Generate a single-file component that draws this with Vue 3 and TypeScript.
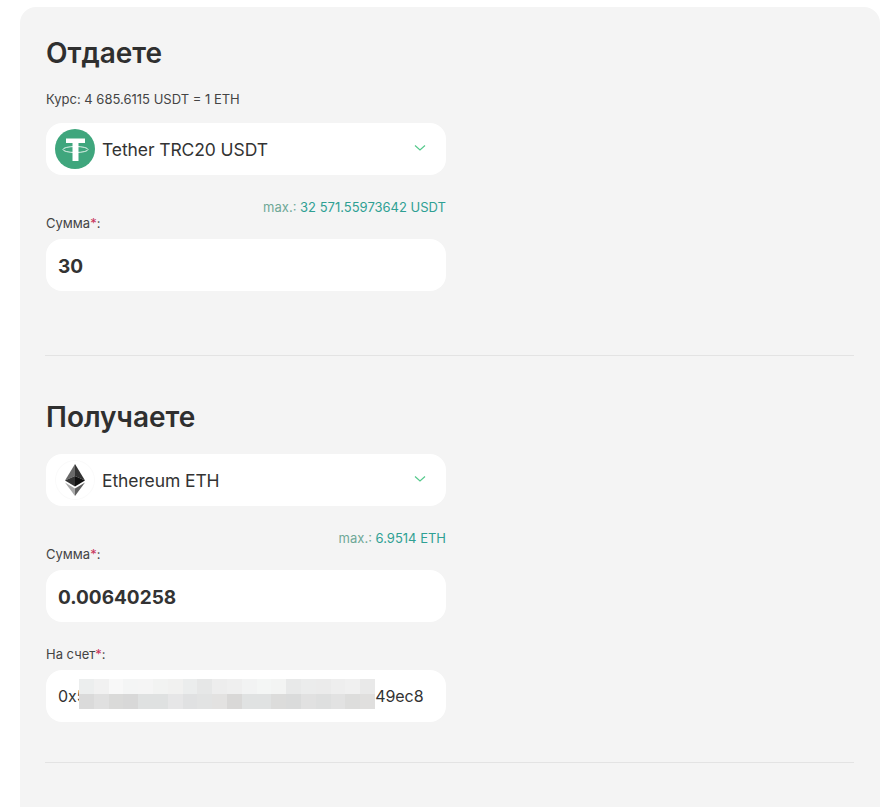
<script setup lang="ts">
const rowA: string[] = ['#eceeee','#f1f1f1','#f8f8f8','#f4f5f5','#f5f5f5','#f2f3f2','#f1f1f0','#ebeded','#e6e7e7','#ededed','#efefef','#f2f3f3','#f4f6f5','#f3f4f3','#e8e9e9','#ebecec','#ebebeb','#eeeeee','#f0f0f0','#e9e9e9']
const rowB: string[] = ['#dadada','#e0e0e0','#dadad9','#d8d8d8','#dfe1e1','#dfe1e1','#e6e6e7','#e0e1e2','#e2e3e3','#e3e2e1','#d9d8d7','#e0e2e2','#e0e2e2','#dcdcdb','#dadbdb','#e1e1e1','#dedfdf','#e2e2e2','#dddddc','#e0dfde']
const cells = [...rowA, ...rowB]
</script>

<template>
  <main class="card">
    <section class="block first">
      <h2 class="title">Отдаете</h2>
      <p class="rate">Курс: 4 685.6115 USDT = 1 ETH</p>
      <div class="select">
        <span class="coin">
          <svg viewBox="0 0 40 40" width="40" height="40">
            <circle cx="20" cy="20" r="20" fill="#3fa67d" />
            <ellipse cx="20.500" cy="20.500" rx="12.500" ry="3" fill="none" stroke="#fff" stroke-width="1" opacity="0.850" />
            <path d="M11 9.500h19v4.500h-6.500v18h-6V14H11z" fill="#fff" />
          </svg>
        </span>
        <span class="name">Tether TRC20 USDT</span>
        <svg class="chev" viewBox="0 0 12 8" width="12" height="8">
          <path d="M1 1.500 6 6l5-4.500" fill="none" stroke="#55c98c" stroke-width="1.200" />
        </svg>
      </div>
      <div class="max"><span class="max-key">max.:</span> 32 571.55973642 USDT</div>
      <label class="label">Сумма<i>*</i>:</label>
      <input class="field strong" value="30" />
    </section>

    <hr class="rule" />

    <section class="block second">
      <h2 class="title">Получаете</h2>
      <div class="select">
        <span class="coin eth">
          <svg viewBox="0 0 40 40" width="40" height="40">
            <circle cx="20" cy="20" r="19.500" fill="#fff" stroke="#fafafa" />
            <polygon points="20,4 10,20.500 20,16" fill="#6a6a6a" />
            <polygon points="20,4 30,20.500 20,16" fill="#333" />
            <polygon points="20,16 10,20.500 20,26.500" fill="#333" />
            <polygon points="20,16 30,20.500 20,26.500" fill="#111" />
            <polygon points="10,22.500 20,36 20,28.500" fill="#a8a8a8" />
            <polygon points="30,22.500 20,36 20,28.500" fill="#5e5e5e" />
          </svg>
        </span>
        <span class="name">Ethereum ETH</span>
        <svg class="chev" viewBox="0 0 12 8" width="12" height="8">
          <path d="M1 1.500 6 6l5-4.500" fill="none" stroke="#55c98c" stroke-width="1.200" />
        </svg>
      </div>
      <div class="max"><span class="max-key">max.:</span> 6.9514 ETH</div>
      <label class="label">Сумма<i>*</i>:</label>
      <input class="field strong" value="0.00640258" />
      <label class="label account">На счет<i>*</i>:</label>
      <div class="wallet">
        <input class="field plain" value="0x5a000000000000000000000000000049ec8" />
        <div class="mosaic">
          <span v-for="(c, i) in cells" :key="i" :style="{ background: c }"></span>
        </div>
      </div>
    </section>

    <hr class="rule" />
  </main>
</template>

<style>
html, body { margin: 0; background: #fff; }
</style>

<style scoped>
.card {
  box-sizing: border-box;
  width: 860px;
  height: 800px;
  margin: 7px 0 0 20px;
  padding: 0 26px;
  background: #f4f4f4;
  border-radius: 16px 16px 0 0;
  font-family: Inter, "Noto Sans", sans-serif;
  color: #2f2f2f;
  overflow: hidden;
}
.block { width: 400px; display: flex; flex-direction: column; box-sizing: border-box; }
.first { padding-top: 29px; height: 348px; }
.second { padding-top: 44px; height: 406px; }
.title {
  margin: 0;
  font-size: 28px;
  line-height: 34px;
  font-weight: 600;
}
.rate {
  margin: 21px 0 0;
  font-size: 13px;
  line-height: 16px;
  color: #444;
}
.first .select { margin-top: 16px; }
.second .select { margin-top: 20px; }
.select {
  height: 52px;
  background: #fff;
  border-radius: 16px;
  display: flex;
  align-items: center;
  padding: 0 20px 0 9px;
}
.coin { width: 40px; height: 40px; display: block; flex: none; }
.coin svg { display: block; }
.name {
  margin-left: 7px;
  font-size: 17.500px;
  letter-spacing: -0.100px;
  color: #333;
  flex: 1;
}
.chev { flex: none; margin-top: -2px; }
.max {
  margin-top: 24px;
  font-size: 13px;
  line-height: 16px;
  text-align: right;
  color: #2fa093;
}
.max-key { color: #6fa897; }
.label {
  display: block;
  font-size: 13px;
  line-height: 16px;
  color: #444;
}
.label i { font-style: normal; color: #c8325a; }
.field {
  display: block;
  box-sizing: border-box;
  width: 100%;
  height: 52px;
  margin-top: 8px;
  padding: 2px 12px 0;
  border: 0;
  outline: 0;
  border-radius: 16px;
  background: #fff;
  font: 400 16px Inter, "Noto Sans", sans-serif;
  color: #333;
}
.strong { font-size: 19px; font-weight: 700; }
.plain { padding-top: 0; letter-spacing: -0.090px; }
.account { margin-top: 24px; }
.wallet { position: relative; }
.mosaic {
  position: absolute;
  left: 33px;
  top: 17px;
  width: 296px;
  height: 30px;
  display: grid;
  grid-template-columns: repeat(20, 1fr);
  grid-template-rows: repeat(2, 15px);
}
.rule {
  height: 1px;
  margin: 0 0 0 -1px;
  width: 809px;
  border: 0;
  background: #e3e3e3;
}
</style>
